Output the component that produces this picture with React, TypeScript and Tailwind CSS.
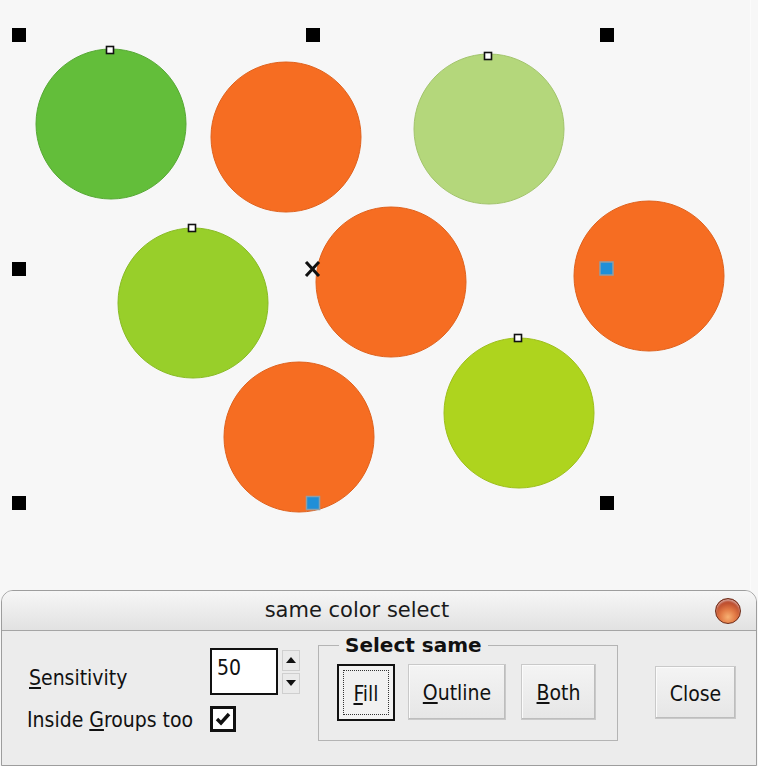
import React from "react"

/* canvas: circles and selection handles */
const circles = [
  { cx: 111, cy: 124, fill: "#63be3a", stroke: "#56a834" },
  { cx: 286, cy: 137, fill: "#f66d22", stroke: "#e0611c" },
  { cx: 489, cy: 129, fill: "#b4d77b", stroke: "#a2c46c" },
  { cx: 193, cy: 303, fill: "#98cf2a", stroke: "#88bb24" },
  { cx: 391, cy: 282, fill: "#f66d22", stroke: "#e0611c" },
  { cx: 649, cy: 276, fill: "#f66d22", stroke: "#e0611c" },
  { cx: 299, cy: 437, fill: "#f66d22", stroke: "#e0611c" },
  { cx: 519, cy: 413, fill: "#aed41e", stroke: "#9dbf1b" },
]

const handles = [
  [19, 35], [313, 35], [607, 35],
  [19, 269],
  [19, 503], [607, 503],
]

const nodes = [
  [110, 50], [488, 56], [192, 228], [518, 338],
]

function Canvas() {
  return (
    <svg width="758" height="590" viewBox="0 0 758 590" className="block">
      <rect x="0" y="0" width="758" height="590" fill="#f7f7f7" />
      <line x1="750.5" y1="0" x2="750.5" y2="590" stroke="#fbfbfb" />
      {circles.map((c, i) => (
        <circle key={i} cx={c.cx} cy={c.cy} r="75" fill={c.fill} stroke={c.stroke} strokeWidth="1" />
      ))}
      {handles.map(([x, y], i) => (
        <rect key={i} x={x - 7} y={y - 7} width="14" height="14" fill="#000" />
      ))}
      {nodes.map(([x, y], i) => (
        <rect key={i} x={x - 3.5} y={y - 3.5} width="7" height="7" fill="#fff" stroke="#111" strokeWidth="1.6" />
      ))}
      <rect x="600" y="262" width="13" height="13" fill="#1f8fd8" stroke="#8e9ea8" strokeWidth="1.5" />
      <rect x="306.5" y="496.5" width="13" height="13" fill="#1f8fd8" stroke="#8e9ea8" strokeWidth="1.5" />
      <path d="M307 263 L318 275 M318 263 L307 275" stroke="#111" strokeWidth="3" strokeLinecap="square" />
    </svg>
  )
}

function Btn({ children, className = "" }: { children: React.ReactNode; className?: string }) {
  return (
    <div
      className={
        "flex items-center justify-center pt-[4px] bg-gradient-to-b from-[#f4f4f4] to-[#e6e6e6] border border-[#c9c9c9] shadow-[inset_-1px_-1px_0_#bdbdbd,inset_1px_1px_0_#fbfbfb] text-[21px] text-[#111] " +
        className
      }
    >
      {children}
    </div>
  )
}

const wide = { fontFamily: "'DejaVu Sans', sans-serif", fontStretch: "normal" } as const

export default function App() {
  return (
    <div
      className="w-[758px] h-[766px] overflow-hidden bg-[#f7f7f7]"
      style={{ fontFamily: "'DejaVu Sans Condensed', 'DejaVu Sans', sans-serif", fontStretch: "condensed" }}
    >
      <Canvas />

      {/* DIALOG */}
      <div className="mx-[1px] h-[176px] rounded-t-[12px] border border-[#9d9d9d] bg-[#ececec] overflow-hidden">
        {/* title bar */}
        <div className="relative h-[40px] flex items-center justify-center pr-[44px] bg-gradient-to-b from-[#f6f6f6] to-[#e2e2e2] border-b border-[#a5a5a5]">
          <span style={wide} className="text-[21px] text-[#1a1a1a]">same color select</span>
          <div className="absolute right-[15px] top-[7px] w-[26px] h-[26px] rounded-full border border-[#6e2a16] bg-[radial-gradient(circle_at_50%_75%,#f7b072_0%,#e27a45_35%,#b8472a_70%,#8a2a18_100%)] shadow-[inset_0_2px_2px_rgba(255,255,255,0.5)]" />
        </div>

        {/* body */}
        <div className="flex items-start">
          {/* left block */}
          <div className="ml-[25px] mt-[17px] flex flex-col">
            <div className="flex items-center h-[47px]">
              <span className="w-[183px] pl-[2px] pt-[14px] text-[21px] text-[#111]">
                <u>S</u>ensitivity
              </span>
              <div className="w-[68px] h-[47px] bg-white border-2 border-[#111] flex items-start pl-[5px] pt-[3px] text-[21px] text-[#111]">
                50
              </div>
              <div className="ml-[4px] flex flex-col gap-[2px]">
                <div className="w-[18px] h-[21px] bg-[#eaeaea] border border-[#cfcfcf] flex items-center justify-center">
                  <svg width="10" height="6" viewBox="0 0 10 6"><path d="M5 0 L10 6 L0 6 Z" fill="#111" /></svg>
                </div>
                <div className="w-[18px] h-[21px] bg-[#eaeaea] border border-[#cfcfcf] flex items-center justify-center">
                  <svg width="10" height="6" viewBox="0 0 10 6"><path d="M0 0 L10 0 L5 6 Z" fill="#111" /></svg>
                </div>
              </div>
            </div>
            <div className="flex items-center h-[26px] mt-[11px]">
              <span className="w-[183px] pt-[3px] text-[21px] text-[#111]">
                Inside <u>G</u>roups too
              </span>
              <div className="w-[26px] h-[26px] bg-white border-[3px] border-[#111] flex items-center justify-center">
                <svg width="16" height="14" viewBox="0 0 16 14">
                  <path d="M2 7 L6 11 L14 2" fill="none" stroke="#111" strokeWidth="3.4" />
                </svg>
              </div>
            </div>
          </div>

          {/* group box */}
          <fieldset className="ml-[18px] mt-[4px] w-[300px] h-[106px] border border-[#b4b4b4] pl-[18px] pr-[21px]">
            <legend style={wide} className="ml-[2px] px-[6px] text-[20px] leading-[20px] font-bold text-[#111]">Select same</legend>
            <div className="flex items-start mt-[9px]">
              <div className="w-[58px] h-[57px] border-2 border-[#111] bg-[#f1f1f1] p-[4px]">
                <div className="w-full h-full border border-dotted border-[#333] flex items-center justify-center pt-[4px] text-[21px] text-[#111]">
                  <span><u>F</u>ill</span>
                </div>
              </div>
              <Btn className="ml-[13px] w-[98px] h-[56px]">
                <span><u>O</u>utline</span>
              </Btn>
              <Btn className="ml-[15px] w-[75px] h-[56px]">
                <span><u>B</u>oth</span>
              </Btn>
            </div>
          </fieldset>

          {/* close */}
          <Btn className="ml-[37px] mt-[35px] w-[81px] h-[53px]">Close</Btn>
        </div>
      </div>
    </div>
  )
}
